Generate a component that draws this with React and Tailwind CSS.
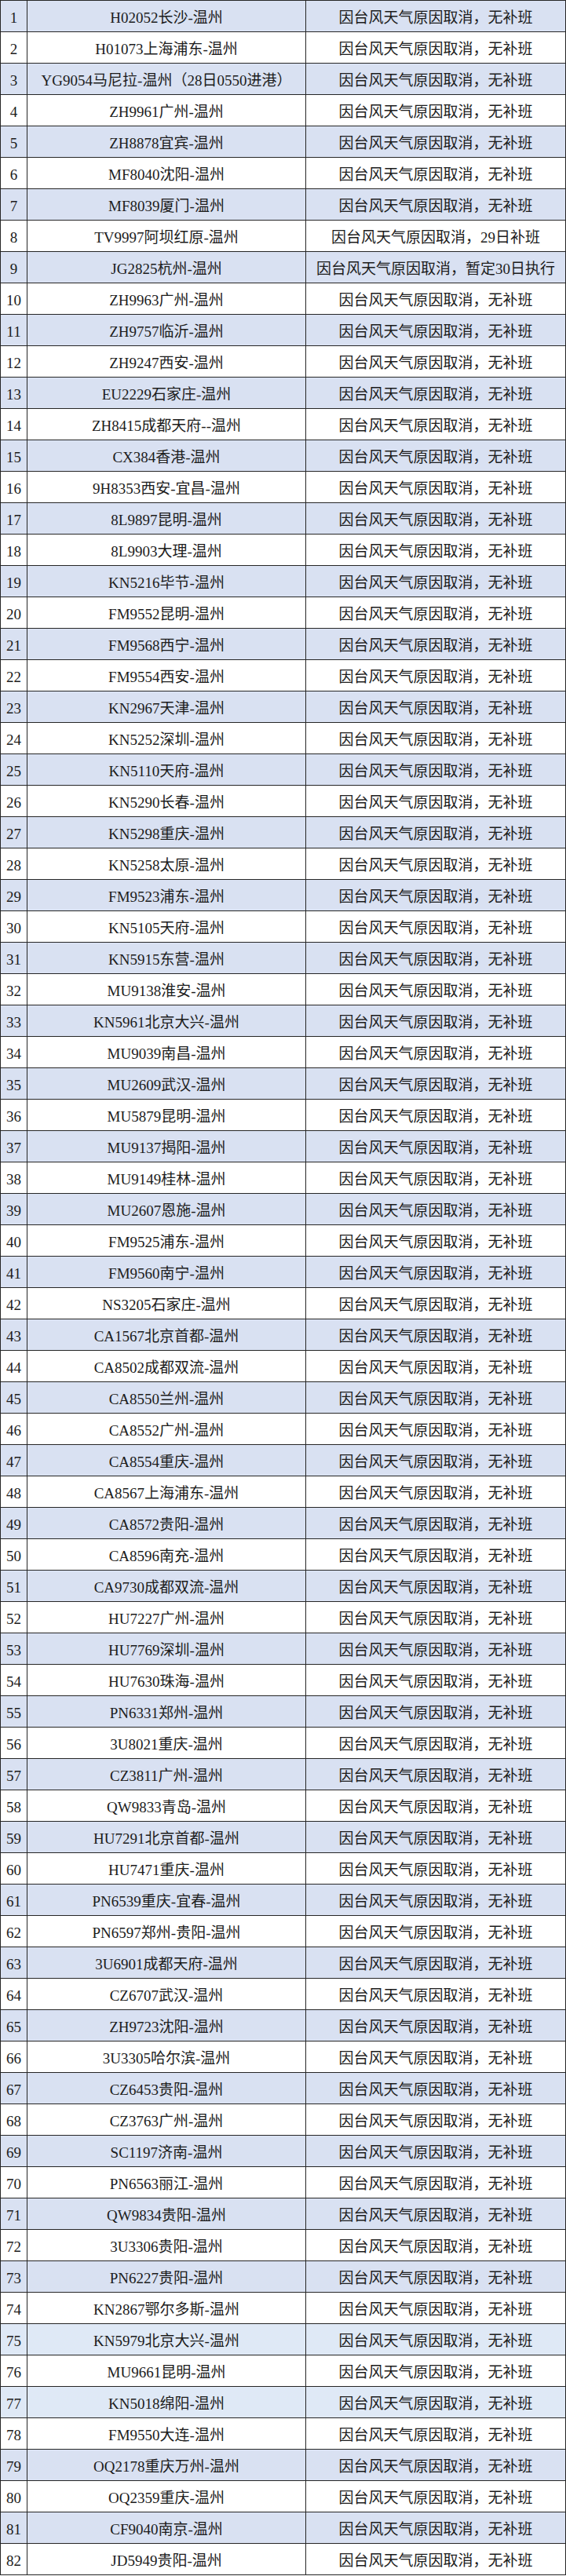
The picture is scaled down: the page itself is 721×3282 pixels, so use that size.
const NORMAL = "因台风天气原因取消，无补班";

const flights = [
  "H02052长沙-温州",
  "H01073上海浦东-温州",
  "YG9054马尼拉-温州（28日0550进港）",
  "ZH9961广州-温州",
  "ZH8878宜宾-温州",
  "MF8040沈阳-温州",
  "MF8039厦门-温州",
  ["TV9997阿坝红原-温州", "因台风天气原因取消，29日补班"],
  ["JG2825杭州-温州", "因台风天气原因取消，暂定30日执行"],
  "ZH9963广州-温州",
  "ZH9757临沂-温州",
  "ZH9247西安-温州",
  "EU2229石家庄-温州",
  "ZH8415成都天府--温州",
  "CX384香港-温州",
  "9H8353西安-宜昌-温州",
  "8L9897昆明-温州",
  "8L9903大理-温州",
  "KN5216毕节-温州",
  "FM9552昆明-温州",
  "FM9568西宁-温州",
  "FM9554西安-温州",
  "KN2967天津-温州",
  "KN5252深圳-温州",
  "KN5110天府-温州",
  "KN5290长春-温州",
  "KN5298重庆-温州",
  "KN5258太原-温州",
  "FM9523浦东-温州",
  "KN5105天府-温州",
  "KN5915东营-温州",
  "MU9138淮安-温州",
  "KN5961北京大兴-温州",
  "MU9039南昌-温州",
  "MU2609武汉-温州",
  "MU5879昆明-温州",
  "MU9137揭阳-温州",
  "MU9149桂林-温州",
  "MU2607恩施-温州",
  "FM9525浦东-温州",
  "FM9560南宁-温州",
  "NS3205石家庄-温州",
  "CA1567北京首都-温州",
  "CA8502成都双流-温州",
  "CA8550兰州-温州",
  "CA8552广州-温州",
  "CA8554重庆-温州",
  "CA8567上海浦东-温州",
  "CA8572贵阳-温州",
  "CA8596南充-温州",
  "CA9730成都双流-温州",
  "HU7227广州-温州",
  "HU7769深圳-温州",
  "HU7630珠海-温州",
  "PN6331郑州-温州",
  "3U8021重庆-温州",
  "CZ3811广州-温州",
  "QW9833青岛-温州",
  "HU7291北京首都-温州",
  "HU7471重庆-温州",
  "PN6539重庆-宜春-温州",
  "PN6597郑州-贵阳-温州",
  "3U6901成都天府-温州",
  "CZ6707武汉-温州",
  "ZH9723沈阳-温州",
  "3U3305哈尔滨-温州",
  "CZ6453贵阳-温州",
  "CZ3763广州-温州",
  "SC1197济南-温州",
  "PN6563丽江-温州",
  "QW9834贵阳-温州",
  "3U3306贵阳-温州",
  "PN6227贵阳-温州",
  "KN2867鄂尔多斯-温州",
  "KN5979北京大兴-温州",
  "MU9661昆明-温州",
  "KN5018绵阳-温州",
  "FM9550大连-温州",
  "OQ2178重庆万州-温州",
  "OQ2359重庆-温州",
  "CF9040南京-温州",
  "JD5949贵阳-温州",
];

// rows 75 and 77 carry a slightly paler blue in the sheet
const paleRows = [75, 77];

function rowColor(n) {
  if (n % 2 === 0) return "bg-white";
  return paleRows.includes(n) ? "bg-[#dfe9f6]" : "bg-[#d9e1f2]";
}

export default function App() {
  return (
    <div className="bg-white w-[721px] min-h-[3282px]">
      <table
        className="w-[721px] table-fixed border-collapse text-[19px] leading-none text-[#1c1c1c]"
        style={{ fontFamily: '"Liberation Serif", "Noto Sans CJK SC", serif' }}
      >
        <colgroup>
          <col className="w-[34px]" />
          <col className="w-[355px]" />
          <col />
        </colgroup>
        <tbody>
          {flights.map((item, i) => {
            const n = i + 1;
            const [flight, reason] = Array.isArray(item) ? item : [item, NORMAL];
            return (
              <tr key={n} className={`h-10 ${rowColor(n)}`}>
                <td className="border border-[#262626] text-center whitespace-nowrap pt-[3px]">{n}</td>
                <td className="border border-[#262626] text-center whitespace-nowrap pt-[3px]">{flight}</td>
                <td className="border border-[#262626] text-center whitespace-nowrap pt-[3px]">{reason}</td>
              </tr>
            );
          })}
        </tbody>
      </table>
    </div>
  );
}
